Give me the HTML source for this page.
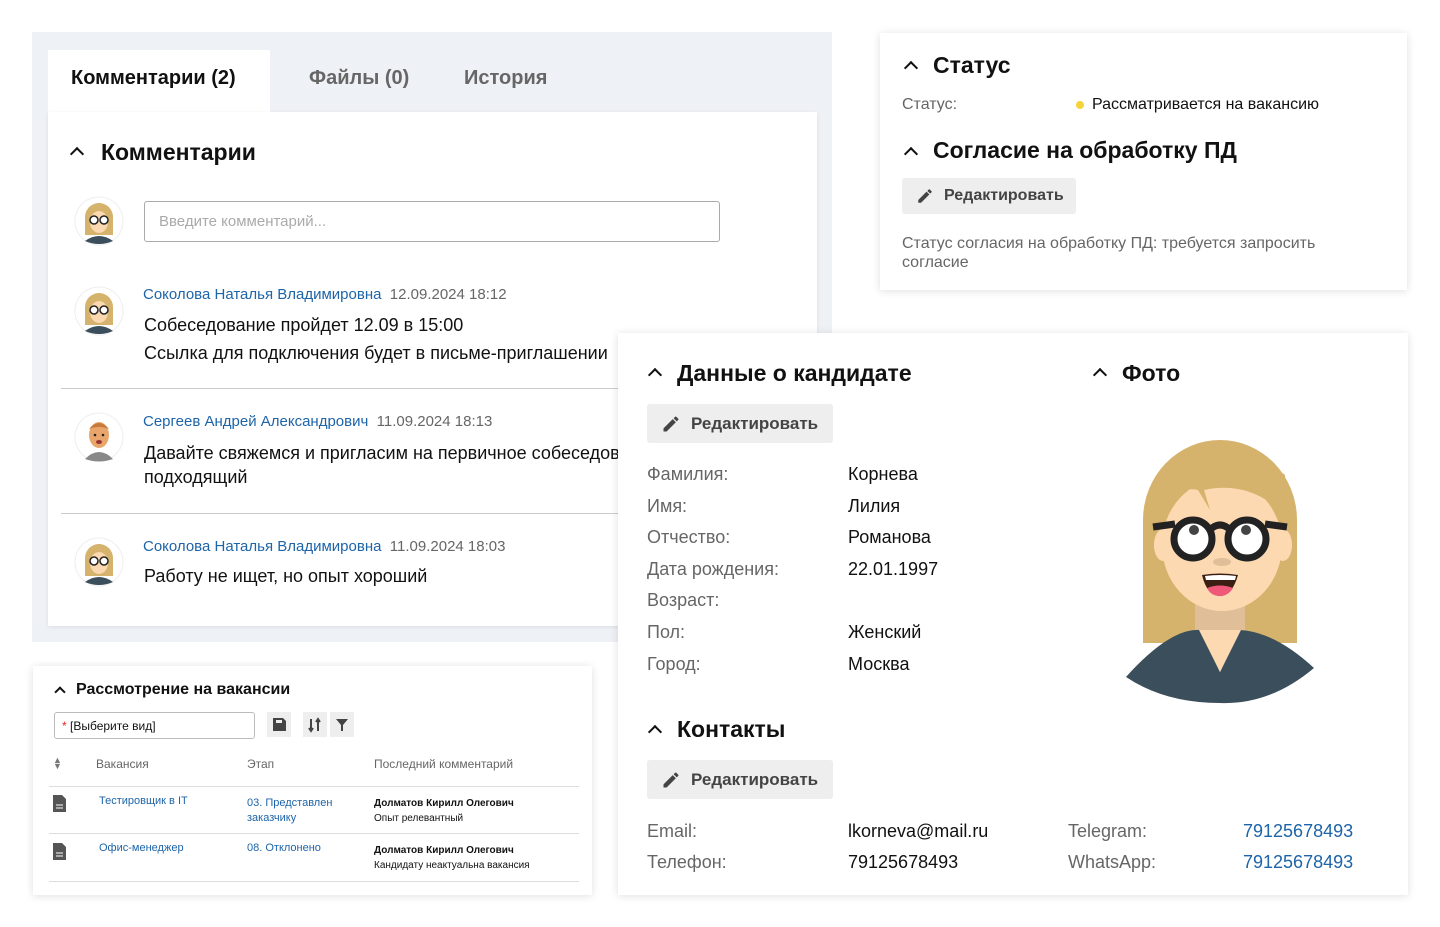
<!DOCTYPE html>
<html><head><meta charset="utf-8"><style>
*{box-sizing:border-box;margin:0;padding:0}
body{width:1440px;height:927px;background:#fff;font-family:"Liberation Sans",Arial,sans-serif;color:#111;position:relative;overflow:hidden}
.abs{position:absolute}
.card{position:absolute;background:#fff;box-shadow:0 1px 8px rgba(0,0,0,.13)}
.lnk{color:#1d64a8}
.gray{color:#666}
.btn{position:absolute;background:#eeeeee;border-radius:3px;font-size:16px;color:#444;display:flex;align-items:center;gap:10px;padding-left:14px}
.chev{display:inline-block;width:10px;height:10px;border-left:2px solid #111;border-top:2px solid #111;transform:rotate(45deg);}
.h{font-size:23px;font-weight:bold}
</style></head><body>
<div class="abs" style="left:32px;top:32px;width:800px;height:610px;background:#eef1f5"></div>
<div class="abs" style="left:48px;top:50px;width:222px;height:64px;background:#fff;font-size:20px;font-weight:bold;padding:17px 0 0 23px">Комментарии (2)</div>
<div class="abs" style="left:309px;top:67px;font-size:20px;color:#666;font-weight:bold">Файлы (0)</div>
<div class="abs" style="left:464px;top:67px;font-size:20px;color:#666;font-weight:bold">История</div>
<div class="card" style="left:48px;top:112px;width:769px;height:514px;box-shadow:0 1px 4px rgba(0,0,0,.08)">
 <span class="chev abs" style="left:24px;top:37px"></span>
 <div class="abs h" style="left:53px;top:27px">Комментарии</div>
 <div class="abs" style="left:96px;top:89px;width:576px;height:41px;border:1px solid #aaa;border-radius:3px;font-size:15px;color:#aaa;padding:11px 14px">Введите комментарий...</div>
 <div class="abs" style="left:95px;top:174px;font-size:15px"><span class="lnk">Соколова Наталья Владимировна</span> <span class="gray">&nbsp;12.09.2024 18:12</span></div>
 <div class="abs" style="left:96px;top:199px;font-size:18px;line-height:28px;white-space:nowrap">Собеседование пройдет 12.09 в 15:00<br>Ссылка для подключения будет в письме-приглашении</div>
 <div class="abs" style="left:13px;top:276px;width:760px;height:1px;background:#ccc"></div>
 <div class="abs" style="left:95px;top:301px;font-size:15px"><span class="lnk">Сергеев Андрей Александрович</span> <span class="gray">&nbsp;11.09.2024 18:13</span></div>
 <div class="abs" style="left:96px;top:329px;font-size:18px;line-height:24px;white-space:nowrap">Давайте свяжемся и пригласим на первичное собеседование<br>подходящий</div>
 <div class="abs" style="left:13px;top:401px;width:760px;height:1px;background:#ccc"></div>
 <div class="abs" style="left:95px;top:426px;font-size:15px"><span class="lnk">Соколова Наталья Владимировна</span> <span class="gray">&nbsp;11.09.2024 18:03</span></div>
 <div class="abs" style="left:96px;top:454px;font-size:18px">Работу не ищет, но опыт хороший</div>
</div>
<svg class="abs" style="left:0;top:0" width="140" height="600">
 <defs><g id="wa"><circle r="24" fill="#fff"/><circle r="24" fill="none" stroke="#eee"/><path d="M-14 14 V-4 A14 14 0 0 1 14 -4 V14Z" fill="#d6b36c"/><ellipse cx="0" cy="1" rx="9" ry="11" fill="#fcd8b0"/><path d="M-14 20 Q0 10 14 20 Q0 26 -14 20Z" fill="#3b4e5b"/><circle cx="-5" cy="-1" r="4" fill="#fff" stroke="#222" stroke-width="1.5"/><circle cx="5" cy="-1" r="4" fill="#fff" stroke="#222" stroke-width="1.5"/></g>
 <g id="ma"><circle r="24" fill="#fff"/><circle r="24" fill="none" stroke="#eee"/><path d="M-14 22 Q0 8 14 22 Q0 27 -14 22Z" fill="#888"/><ellipse cx="0" cy="-2" rx="10" ry="13" fill="#e8a66c"/><path d="M-10 -8 Q0 -20 10 -8 Q0 -12 -10 -8Z" fill="#c77a3b"/><circle cx="-4" cy="-2" r="1.3" fill="#222"/><circle cx="4" cy="-2" r="1.3" fill="#222"/><ellipse cx="0" cy="5" rx="3" ry="2" fill="#933"/></g></defs>
 <use href="#wa" x="99" y="221"/><use href="#wa" x="99" y="311"/><use href="#ma" x="99" y="437"/><use href="#wa" x="99" y="562"/>
</svg>

<div class="card" style="left:880px;top:33px;width:527px;height:257px">
 <span class="chev abs" style="left:26px;top:30px"></span>
 <div class="abs h" style="left:53px;top:19px">Статус</div>
 <div class="abs gray" style="left:22px;top:63px;font-size:16px">Статус:</div>
 <div class="abs" style="left:196px;top:68px;width:8px;height:8px;border-radius:50%;background:#f5d33a"></div>
 <div class="abs" style="left:212px;top:63px;font-size:16px">Рассматривается на вакансию</div>
 <span class="chev abs" style="left:26px;top:116px"></span>
 <div class="abs h" style="left:53px;top:104px">Согласие на обработку ПД</div>
 <div class="btn" style="left:22px;top:145px;width:174px;height:36px"><svg width="18" height="18" viewBox="0 0 24 24"><path d="M3 17.25V21h3.75L17.81 9.94l-3.75-3.75L3 17.25zM20.71 7.04a1 1 0 000-1.41l-2.34-2.34a1 1 0 00-1.41 0l-1.83 1.83 3.75 3.75 1.83-1.83z" fill="#444"/></svg><b>Редактировать</b></div>
 <div class="abs gray" style="left:22px;top:201px;font-size:16px;line-height:19px;width:470px">Статус согласия на обработку ПД: требуется запросить согласие</div>
</div>

<div class="card" style="left:618px;top:333px;width:790px;height:562px">
 <span class="chev abs" style="left:32px;top:37px"></span>
 <div class="abs h" style="left:59px;top:27px">Данные о кандидате</div>
 <span class="chev abs" style="left:477px;top:37px"></span>
 <div class="abs h" style="left:504px;top:27px">Фото</div>
 <div class="btn" style="left:29px;top:71px;width:186px;height:39px;font-size:17px"><svg width="20" height="20" viewBox="0 0 24 24"><path d="M3 17.25V21h3.75L17.81 9.94l-3.75-3.75L3 17.25zM20.71 7.04a1 1 0 000-1.41l-2.34-2.34a1 1 0 00-1.41 0l-1.83 1.83 3.75 3.75 1.83-1.83z" fill="#444"/></svg><b>Редактировать</b></div>
 <div class="abs gray" style="left:29px;top:126px;font-size:18px;line-height:31.6px">Фамилия:<br>Имя:<br>Отчество:<br>Дата рождения:<br>Возраст:<br>Пол:<br>Город:</div>
 <div class="abs" style="left:230px;top:126px;font-size:18px;line-height:31.6px">Корнева<br>Лилия<br>Романова<br>22.01.1997<br>&nbsp;<br>Женский<br>Москва</div>
 <span class="chev abs" style="left:32px;top:394px"></span>
 <div class="abs h" style="left:59px;top:383px">Контакты</div>
 <div class="btn" style="left:29px;top:427px;width:186px;height:39px;font-size:17px"><svg width="20" height="20" viewBox="0 0 24 24"><path d="M3 17.25V21h3.75L17.81 9.94l-3.75-3.75L3 17.25zM20.71 7.04a1 1 0 000-1.41l-2.34-2.34a1 1 0 00-1.41 0l-1.83 1.83 3.75 3.75 1.83-1.83z" fill="#444"/></svg><b>Редактировать</b></div>
 <div class="abs gray" style="left:29px;top:483px;font-size:18px;line-height:31px">Email:<br>Телефон:</div>
 <div class="abs" style="left:230px;top:483px;font-size:18px;line-height:31px">lkorneva@mail.ru<br>79125678493</div>
 <div class="abs gray" style="left:450px;top:483px;font-size:18px;line-height:31px">Telegram:<br>WhatsApp:</div>
 <div class="abs lnk" style="left:625px;top:483px;font-size:18px;line-height:31px">79125678493<br>79125678493</div>
</div>
<svg class="abs" style="left:1110px;top:430px" width="220" height="280" viewBox="1110 430 220 280">
 <path d="M1143 643 V520 A77 80 0 0 1 1297 520 V643Z" fill="#d6b36c"/>
 <rect x="1195" y="590" width="50" height="50" fill="#e0bf98"/>
 <path d="M1126 677 Q1170 628 1200 630 L1220 672 L1240 630 Q1275 632 1314 668 Q1270 705 1220 703 Q1165 703 1126 677Z" fill="#3b4e5b"/>
 <path d="M1199 630 L1220 672 L1241 630 Z" fill="#fcd9b0"/>
 <ellipse cx="1222" cy="545" rx="60" ry="66" fill="#fcd9b0"/>
 <ellipse cx="1163" cy="545" rx="9" ry="16" fill="#fcd9b0"/><ellipse cx="1283" cy="545" rx="9" ry="16" fill="#fcd9b0"/>
 <path d="M1160 515 Q1175 485 1198 490 L1210 510 L1204 490 Q1250 480 1285 515 L1285 475 Q1255 450 1220 450 Q1175 452 1158 490Z" fill="#d6b36c"/>
 <circle cx="1193" cy="539" r="19" fill="#fff" stroke="#222" stroke-width="7"/>
 <circle cx="1247" cy="539" r="19" fill="#fff" stroke="#222" stroke-width="7"/>
 <path d="M1153 527 L1175 524 M1212 528 Q1220 522 1228 528 M1265 524 L1287 527" stroke="#222" stroke-width="7" fill="none"/>
 <circle cx="1194" cy="530" r="5" fill="#444"/><circle cx="1246" cy="530" r="5" fill="#444"/>
 <ellipse cx="1222" cy="562" rx="9" ry="4" fill="#e0bf98"/>
 <path d="M1202 575 Q1220 572 1238 575 Q1232 596 1220 596 Q1207 596 1202 575Z" fill="#3d1e12"/>
 <path d="M1205 576 Q1220 574 1236 576 L1235 580 L1206 580Z" fill="#fff"/>
 <path d="M1207 588 Q1220 583 1233 588 Q1228 596 1220 596 Q1211 596 1207 588Z" fill="#f0587a"/>
</svg>

<div class="card" style="left:33px;top:666px;width:559px;height:229px">
 <span class="chev abs" style="left:23px;top:22px;width:8px;height:8px"></span>
 <div class="abs" style="left:43px;top:15px;font-size:16px;font-weight:bold">Рассмотрение на вакансии</div>
 <div class="abs" style="left:21px;top:46px;width:201px;height:27px;border:1px solid #bbb;border-radius:3px;font-size:12px;padding:6px 7px"><span style="color:#e22">*</span> [Выберите вид]</div>
 <div class="abs" style="left:234px;top:46px;width:24px;height:25px;background:#eee"><svg width="24" height="25" viewBox="0 0 24 25"><path d="M6 6h10l3 3v10H6z M9 8h6v3H9z" fill="#444" fill-rule="evenodd"/></svg></div>
 <div class="abs" style="left:270px;top:46px;width:24px;height:25px;background:#eee"><svg width="24" height="25"><path d="M8 7v12M6 16l2 3 2-3M15 19V7M13 10l2-3 2 3" stroke="#444" stroke-width="2" fill="none"/></svg></div>
 <div class="abs" style="left:297px;top:46px;width:24px;height:25px;background:#eee"><svg width="24" height="25"><path d="M6 7h12l-5 6v6h-2v-6z" fill="#444"/></svg></div>
 <div class="abs" style="left:20px;top:91px;font-size:9px;color:#777;line-height:6px">▲<br>▼</div>
 <div class="abs gray" style="left:63px;top:91px;font-size:12px">Вакансия</div>
 <div class="abs gray" style="left:214px;top:91px;font-size:12px">Этап</div>
 <div class="abs gray" style="left:341px;top:91px;font-size:12px">Последний комментарий</div>
 <div class="abs" style="left:16px;top:120px;width:530px;height:1px;background:#ddd"></div>
 <svg class="abs" style="left:20px;top:129px" width="14" height="17"><path d="M0 0h9l4 4v13H0z" fill="#555"/><path d="M3 10h7M3 13h7" stroke="#fff" stroke-width="1"/></svg>
 <div class="abs lnk" style="left:66px;top:129px;font-size:11px">Тестировщик в IT</div>
 <div class="abs lnk" style="left:214px;top:130px;font-size:11px;line-height:15px">03. Представлен<br>заказчику</div>
 <div class="abs" style="left:341px;top:130px;font-size:10px;line-height:15px"><b>Долматов Кирилл Олегович</b><br>Опыт релевантный</div>
 <div class="abs" style="left:16px;top:167px;width:530px;height:1px;background:#ddd"></div>
 <svg class="abs" style="left:20px;top:177px" width="14" height="17"><path d="M0 0h9l4 4v13H0z" fill="#555"/><path d="M3 10h7M3 13h7" stroke="#fff" stroke-width="1"/></svg>
 <div class="abs lnk" style="left:66px;top:176px;font-size:11px">Офис-менеджер</div>
 <div class="abs lnk" style="left:214px;top:176px;font-size:11px">08. Отклонено</div>
 <div class="abs" style="left:341px;top:177px;font-size:10px;line-height:15px"><b>Долматов Кирилл Олегович</b><br>Кандидату неактуальна вакансия</div>
 <div class="abs" style="left:16px;top:215px;width:530px;height:1px;background:#ddd"></div>
</div>
</body></html>
